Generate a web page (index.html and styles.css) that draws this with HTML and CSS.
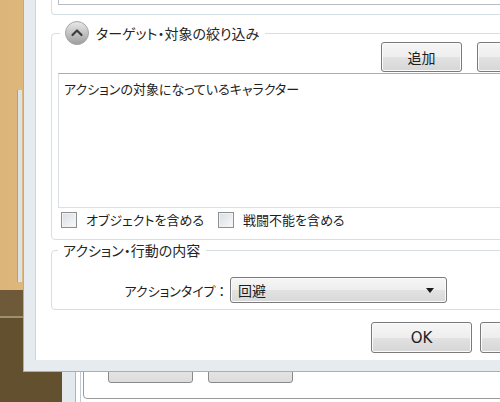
FILE: index.html
```html
<!DOCTYPE html>
<html lang="ja">
<head>
    <meta charset="UTF-8">
    <title>アクション設定</title>
    <link rel="stylesheet" href="styles.css">
</head>
<body>
    <div class="desktop">
        <!-- 背景のスクロールバー -->
        <div class="side-bar"></div>

        <!-- 後ろのウィンドウ -->
        <div class="back-window">
            <div class="back-client">
                <div class="back-panel">
                    <div class="back-btn"></div>
                    <div class="back-btn"></div>
                </div>
            </div>
        </div>

        <!-- ダイアログ -->
        <div class="dialog">
            <div class="client">
                <div class="group-top"><div class="textbox-top"></div></div>

                <fieldset class="group target">
                    <legend>
                        <span class="expander">
                            <svg width="24" height="24" viewBox="0 0 24 24">
                                <defs>
                                    <linearGradient id="orb" x1="0" y1="0" x2="0" y2="1">
                                        <stop offset="0" stop-color="#e9e9e9"/>
                                        <stop offset="0.5" stop-color="#c4c4c4"/>
                                        <stop offset="1" stop-color="#9c9c9c"/>
                                    </linearGradient>
                                </defs>
                                <circle cx="12" cy="12" r="11.5" fill="url(#orb)" stroke="#a5a5a5"/>
                                <path d="M7.5 14 L12 9.5 L16.5 14" fill="none" stroke="#3c3c3c" stroke-width="2.2" stroke-linecap="round" stroke-linejoin="round"/>
                            </svg>
                        </span>
                        ターゲット・対象の絞り込み
                    </legend>
                    <div class="btn-row">
                        <button class="btn">追加</button>
                        <button class="btn">削除</button>
                    </div>
                    <div class="listbox">アクションの対象になっているキャラクター</div>
                    <div class="check-row">
                        <label class="check first"><span class="box"></span>オブジェクトを含める</label>
                        <label class="check"><span class="box"></span>戦闘不能を含める</label>
                    </div>
                </fieldset>

                <fieldset class="group action">
                    <legend>アクション・行動の内容</legend>
                    <div class="field-row">
                        <span class="field-label">アクションタイプ ：</span>
                        <div class="combo">
                            <span>回避</span>
                            <span class="arrow"></span>
                        </div>
                    </div>
                </fieldset>

                <div class="dialog-buttons">
                    <button class="btn big">OK</button>
                    <button class="btn big">取消</button>
                </div>
            </div>
        </div>
    </div>
</body>
</html>
```

FILE: styles.css
```css
body {
    margin: 0;
    font-family: "Noto Sans CJK JP", sans-serif;
    font-size: 13px;
    font-feature-settings: "palt" 1;
    color: #1e1e1e;
}
.desktop {
    position: relative;
    width: 500px;
    height: 402px;
    overflow: hidden;
    white-space: nowrap;
    background:
        linear-gradient(180deg, transparent 0 290px, #6e5a38 290px 316px, #a08f6e 316px 318px, #63502f 318px),
        linear-gradient(90deg, #dcb57a, #ebcd98 60%, #e2c088);
}
.side-bar {
    position: absolute;
    left: 17px;
    top: 90px;
    width: 4px;
    height: 192px;
    background: #dde2e6;
    border-left: 1px solid #9aa3ab;
}
.back-window {
    position: absolute;
    left: 62px;
    top: 330px;
    width: 600px;
    height: 120px;
    padding-left: 13px;
    background: #e4e9ee;
    box-sizing: border-box;
}
.back-client {
    height: 100%;
    background: #fff;
    border-left: 1px solid #aab4be;
    padding: 10px 0 0 7px;
    box-shadow: inset 4px 0 0 #fff, inset 5px 0 0 #c3cad1;
}
.back-panel {
    display: flex;
    gap: 15px;
    height: 59px;
    width: 700px;
    padding: 12px 0 0 24px;
    box-sizing: border-box;
    border: 1px solid #9a9a9a;
    border-radius: 4px;
}
.back-btn {
    width: 85px;
    height: 30px;
    border: 1px solid #8a8a8a;
    border-radius: 3px;
    box-sizing: border-box;
    background: linear-gradient(#f2f2f2, #dcdcdc);
}
.dialog {
    position: absolute;
    left: 23px;
    top: 0;
    padding: 0 11px 11px 11px;
    background: #e6ebf0;
    border-left: 1px solid #a4afba;
    border-bottom: 1px solid #a4afba;
}
.client {
    width: 561px;
    height: 360px;
    box-sizing: border-box;
    padding: 0 15px;
    background: #fff;
    border-left: 1px solid #ccd4db;
}
.group-top {
    height: 15px;
    box-sizing: border-box;
    border: 1px solid #d5dfe5;
    border-top: 0;
    border-radius: 0 0 4px 4px;
    padding: 0 7px 0 6px;
}
.textbox-top {
    height: 5px;
    box-sizing: border-box;
    border: 1px solid #b8bcc4;
    border-top: 0;
}
.group {
    margin: 0;
    min-width: 0;
    border: 1px solid #d5dfe5;
    border-radius: 4px;
}
.group legend {
    font-size: 14px;
    line-height: 16px;
    color: #262626;
}
.target {
    margin-top: 6px;
    padding: 0 7px 11px 6px;
}
.target legend {
    display: flex;
    align-items: center;
    gap: 7px;
    margin-left: 2px;
    padding: 0 6px 0 5px;
}
.expander {
    display: flex;
    width: 24px;
    height: 24px;
}
.btn-row {
    display: flex;
    justify-content: flex-end;
    gap: 15px;
    margin-top: -3px;
    padding-right: 15px;
}
.btn {
    width: 81px;
    height: 30px;
    padding: 0;
    font: inherit;
    font-size: 14px;
    color: #1e1e1e;
    border: 1px solid #7a7a7a;
    border-radius: 3px;
    background: linear-gradient(#f6f6f6 0%, #eeeeee 50%, #e2e2e2 51%, #d6d6d6 100%);
    box-shadow: inset 0 0 0 1px #fbfbfb;
}
.btn.big {
    width: 101px;
    height: 31px;
    font-family: "DejaVu Sans", "Noto Sans CJK JP", sans-serif;
    font-size: 15px;
}
.listbox {
    height: 135px;
    box-sizing: border-box;
    margin-top: 1px;
    padding: 6px 5px;
    line-height: 18px;
    border: 1px solid #dbdfe6;
    border-top-color: #abadb3;
}
.check-row {
    display: flex;
    margin-top: 4px;
    padding-left: 3px;
    line-height: 16px;
}
.check {
    display: flex;
    align-items: center;
    gap: 9px;
}
.check.first {
    width: 157px;
}
.box {
    width: 16px;
    height: 16px;
    box-sizing: border-box;
    border: 1px solid #8e8f8f;
    background: linear-gradient(135deg, #d9dde2, #f8f9fa);
    box-shadow: inset 0 0 0 1px #f0f2f4;
}
.action {
    margin-top: 2px;
    padding: 0 7px 6px 6px;
}
.action legend {
    padding: 0 6px 0 5px;
}
.field-row {
    display: flex;
    align-items: center;
    gap: 5px;
    margin-top: 19px;
}
.field-label {
    display: flex;
    justify-content: flex-end;
    width: 97px;
    margin-left: 70px;
}
.combo {
    display: flex;
    align-items: center;
    justify-content: space-between;
    width: 217px;
    height: 26px;
    box-sizing: border-box;
    padding: 0 12px 0 7px;
    font-size: 14px;
    border: 1px solid #7a7a7a;
    border-radius: 3px;
    background: linear-gradient(#f6f6f6 0%, #eeeeee 50%, #e2e2e2 51%, #d8d8d8 100%);
    box-shadow: inset 0 0 0 1px #fbfbfb;
}
.arrow {
    width: 0;
    height: 0;
    border-left: 4px solid transparent;
    border-right: 4px solid transparent;
    border-top: 5px solid #1a1a1a;
}
.dialog-buttons {
    display: flex;
    justify-content: flex-end;
    gap: 8px;
    margin-top: 12px;
}
```
